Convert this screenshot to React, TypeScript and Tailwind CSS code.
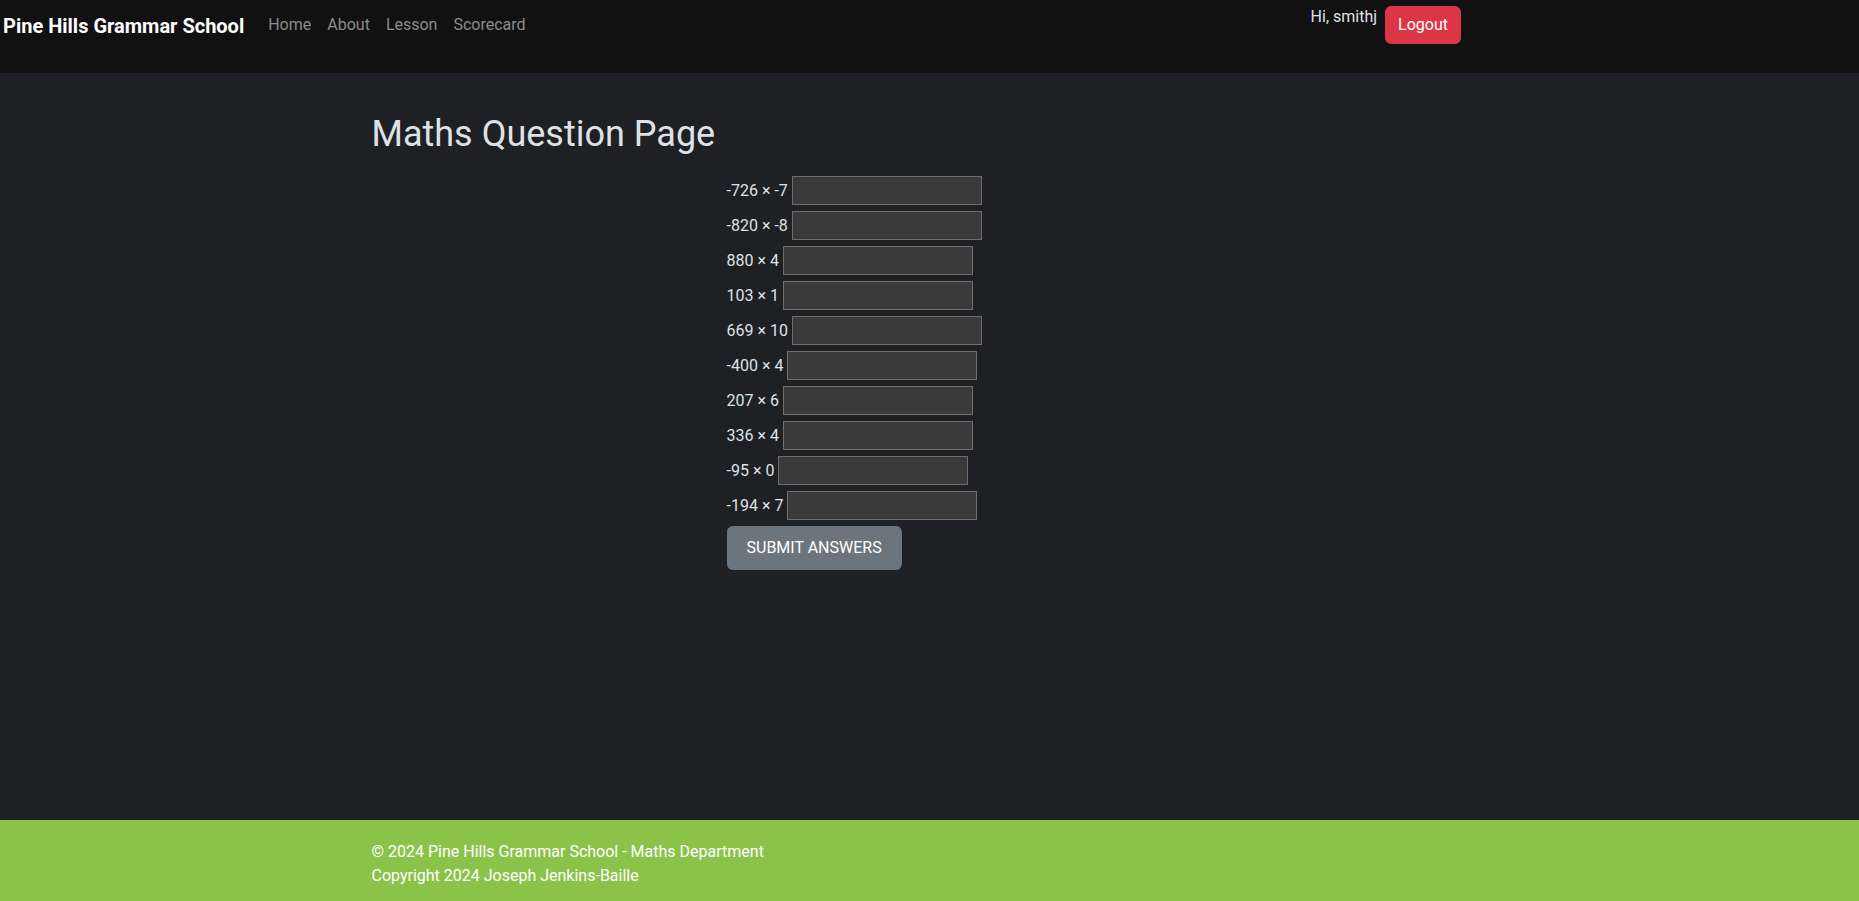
const questions: [string, number, string][] = [
  ["-726", 0, "-7"],
  ["-820", 0, "-8"],
  ["880", 0, "4"],
  ["103", 0, "1"],
  ["669", 0, "10"],
  ["-400", 0, "4"],
  ["207", 0, "6"],
  ["336", 0, "4"],
  ["-95", 0, "0"],
  ["-194", 0, "7"],
];

const links = ["Home", "About", "Lesson", "Scorecard"];

export default function App() {
  return (
    <div className="min-h-screen flex flex-col bg-[#1f2023] font-['Roboto','Liberation_Sans',sans-serif] text-[#dee2e6]">
      <header className="h-[73px] bg-[#111111] flex items-start pl-[3px] pt-[5px]">
        <a href="#" className="mt-[5.5px] mr-4 text-[20px] leading-[30px] font-bold text-white">
          Pine Hills Grammar School
        </a>
        <nav className="flex">
          {links.map((l) => (
            <a key={l} href="#" className="px-2 py-2 text-base leading-6 text-[#8c8c8c]">
              {l}
            </a>
          ))}
        </nav>
        <div className="ml-auto mr-[398px] flex items-start gap-2">
          <span className="text-base leading-6 text-[#dee2e6]">Hi, smithj</span>
          <button className="mt-px rounded-[6px] border border-[#dc3545] bg-[#dc3545] px-3 py-[6px] text-base leading-6 text-white">
            Logout
          </button>
        </div>
      </header>

      <main className="flex-1">
        <div className="w-[1140px] mx-auto px-3 pt-[40px]">
          <h2 className="text-[36px] leading-[1.2] font-normal">Maths Question Page</h2>
          <form className="ml-[355px] mt-[20px] flex flex-col items-start gap-[6px]">
            {questions.map(([a, , b], i) => (
              <div key={i} className="flex items-center gap-[4px]">
                <label className="text-base leading-6">
                  {a} × {b}
                </label>
                <input
                  type="text"
                  className="w-[190px] h-[29px] bg-[#3a3a3a] border border-[#6e6e6e] outline-none px-1 text-white"
                />
              </div>
            ))}
            <button
              type="button"
              className="rounded-[6px] bg-[#6c757d] px-[20px] py-[10px] text-base leading-6 text-white uppercase"
            >
              Submit Answers
            </button>
          </form>
        </div>
      </main>

      <footer className="bg-[#8bc34a] pt-5 pb-[13px]">
        <div className="w-[1140px] mx-auto px-3 text-base leading-6 text-white">
          <div>© 2024 Pine Hills Grammar School - Maths Department</div>
          <div>Copyright 2024 Joseph Jenkins-Baille</div>
        </div>
      </footer>
    </div>
  );
}
